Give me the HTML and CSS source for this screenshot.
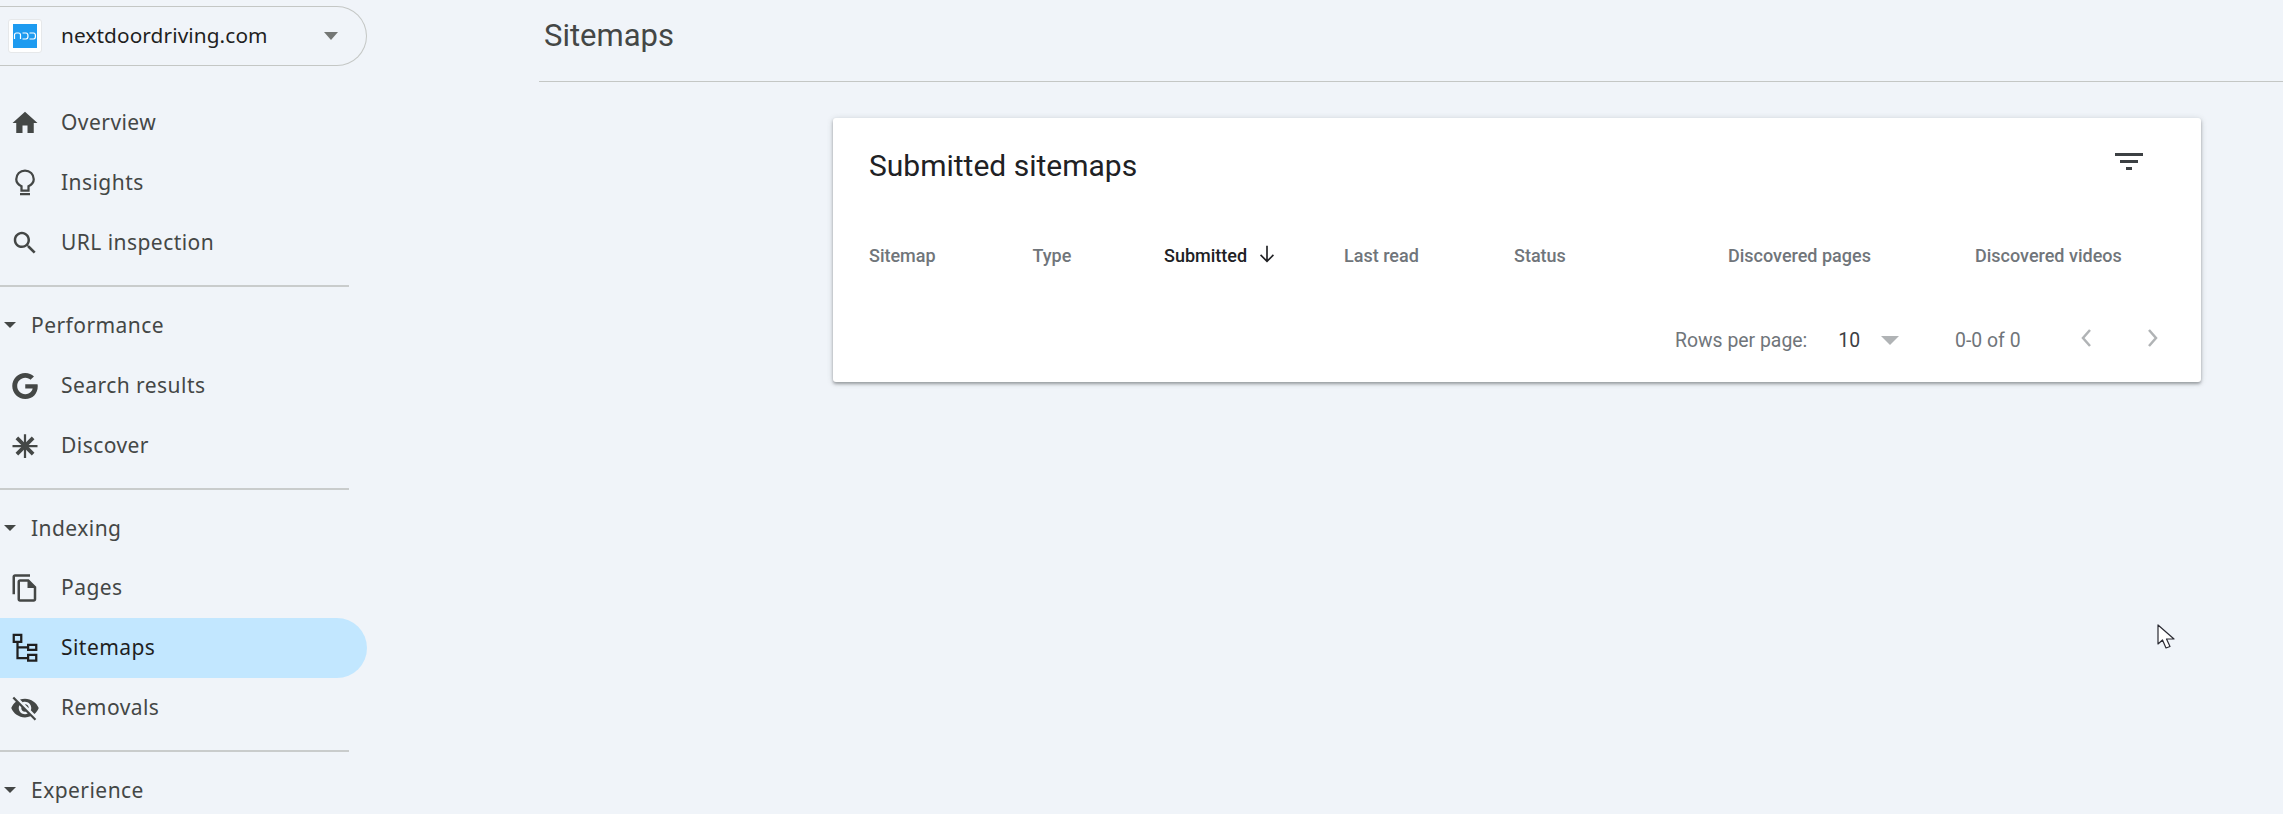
FILE: index.html
```html
<!DOCTYPE html>
<html lang="en">
<head>
<meta charset="utf-8">
<title>Sitemaps</title>
<link rel="stylesheet" href="styles.css">
</head>
<body>
<div class="app">
  <aside class="sidebar">
    <div class="property">
      <span class="logo">
        <svg viewBox="0 0 24 24" width="24" height="24"><rect width="24" height="24" fill="#1e9bf0"/><path d="M1.500 15V11Q1.500 9 3.500 9H5.500Q7.500 9 7.500 11V15M9.500 9H13Q15 9 15 12Q15 15 13 15H9.500M16.500 9H20.500Q22.500 9 22.500 12Q22.500 15 20.500 15H16.500" fill="none" stroke="#fff" stroke-width="1.200"/></svg>
      </span>
      <span class="property-name">nextdoordriving.com</span>
      <span class="caret caret-prop"></span>
    </div>
    <nav class="nav">
      <a class="item"><svg class="icon" viewBox="0 0 24 24"><path d="M10 20v-6h4v6h5v-8h3L12 3 2 12h3v8z"/></svg><span>Overview</span></a>
      <a class="item"><svg class="icon" viewBox="0 0 24 24"><path class="line" d="M9.200 18V14.600C6.600 13.300 5 11.400 5 9C5 5.100 8.100 2 12 2S19 5.100 19 9C19 11.400 17.400 13.300 14.800 14.600V18ZM8 20.800H16"/></svg><span>Insights</span></a>
      <a class="item"><svg class="icon" viewBox="0 0 24 24"><path d="M15.500 14h-.79l-.28-.27C15.410 12.590 16 11.110 16 9.500 16 5.910 13.090 3 9.500 3S3 5.910 3 9.500 5.910 16 9.500 16c1.610 0 3.090-.59 4.230-1.570l.27.28v.79l5 4.990L20.490 19l-4.990-5zm-6 0C7.010 14 5 11.990 5 9.500S7.010 5 9.500 5 14 7.010 14 9.500 11.990 14 9.500 14z"/></svg><span>URL inspection</span></a>
      <div class="divider"></div>
      <div class="group group-wide"><i class="caret caret-group"></i><span>Performance</span></div>
      <a class="item"><svg class="icon icon-g" viewBox="0 0 24 24"><path d="M12.240 10.285V14.400h6.806c-.275 1.765-2.056 5.174-6.806 5.174-4.095 0-7.439-3.389-7.439-7.574s3.345-7.574 7.439-7.574c2.330 0 3.891.989 4.785 1.849l3.254-3.138C18.189 1.186 15.479 0 12.240 0c-6.635 0-12 5.365-12 12s5.365 12 12 12c6.926 0 11.520-4.869 11.520-11.726 0-.788-.085-1.390-.189-1.989H12.240z"/></svg><span>Search results</span></a>
      <a class="item"><svg class="icon" viewBox="0 0 24 24"><path class="line" d="M12 2.500V21.500M2 12H22"/><path class="line thick" d="M5.500 5.500L18.500 18.500M18.500 5.500L5.500 18.500"/></svg><span>Discover</span></a>
      <div class="divider"></div>
      <div class="group"><i class="caret caret-group"></i><span>Indexing</span></div>
      <a class="item"><svg class="icon" viewBox="0 0 24 24"><path d="M16 1H4c-1.100 0-2 .9-2 2v14h2V3h12V1zm-1 4H8c-1.100 0-1.990.9-1.990 2L6 21c0 1.100.89 2 1.990 2H19c1.100 0 2-.9 2-2V11l-6-6zM8 21V7h6v5h5v9H8z"/></svg><span>Pages</span></a>
      <a class="item active"><svg class="icon" viewBox="0 0 24 24"><path class="line" d="M3 1.500H9V7H3ZM6 7V20H14.500M6 11.500H14.500M14.500 9.500H21V13.500H14.500ZM14.500 17.500H21V22H14.500Z"/></svg><span>Sitemaps</span></a>
      <a class="item"><svg class="icon" viewBox="0 0 24 24"><path d="M12 7c2.760 0 5 2.240 5 5 0 .65-.13 1.260-.36 1.830l2.920 2.920c1.510-1.260 2.700-2.890 3.430-4.750-1.730-4.390-6-7.500-11-7.500-1.400 0-2.740.25-3.980.7l2.160 2.160C10.740 7.130 11.350 7 12 7zM2 4.270l2.280 2.280.46.46C3.080 8.300 1.780 10.020 1 12c1.730 4.390 6 7.500 11 7.500 1.550 0 3.030-.3 4.380-.84l.42.42L19.730 22 21 20.730 3.270 3 2 4.270zM7.530 9.800l1.550 1.550c-.05.21-.08.43-.08.65 0 1.660 1.340 3 3 3 .22 0 .44-.03.65-.08l1.550 1.550c-.67.33-1.410.53-2.200.53-2.760 0-5-2.240-5-5 0-.79.2-1.530.53-2.200zm4.310-.78l3.150 3.150.02-.16c0-1.660-1.340-3-3-3l-.17.01z"/></svg><span>Removals</span></a>
      <div class="divider"></div>
      <div class="group"><i class="caret caret-group"></i><span>Experience</span></div>
    </nav>
  </aside>
  <main class="main">
    <header class="page-head"><h1>Sitemaps</h1></header>
    <section class="card">
      <div class="card-head">
        <h2>Submitted sitemaps</h2>
        <div class="filter"><i class="f1"></i><i class="f2"></i><i class="f3"></i></div>
      </div>
      <div class="columns">
        <span>Sitemap</span>
        <span>Type</span>
        <span class="sorted">Submitted<svg class="arrow" viewBox="0 0 24 24"><path d="M12 3V20M5 13L12 20L19 13"/></svg></span>
        <span>Last read</span>
        <span>Status</span>
        <span class="num">Discovered pages</span>
        <span class="num">Discovered videos</span>
      </div>
      <div class="pager">
        <span class="rows-label">Rows per page:</span>
        <span class="rows-value">10</span>
        <span class="caret caret-pager"></span>
        <span class="range">0-0 of 0</span>
        <svg class="chev chev-prev" viewBox="0 0 12 20"><path d="M10 2L3 10L10 18"/></svg>
        <svg class="chev" viewBox="0 0 12 20"><path d="M2 2L9 10L2 18"/></svg>
      </div>
    </section>
  </main>
</div>
<svg class="cursor" viewBox="0 0 19 28" width="19" height="28"><path d="M1 1V20L5.500 16L9 24L13 22.500L9.500 15H17Z" fill="#fff" stroke="#2b2b33" stroke-width="1.200" stroke-linejoin="round"/></svg>
</body>
</html>
```
FILE: styles.css
```css
* { box-sizing: border-box; }
html, body { margin: 0; height: 100%; overflow: hidden; }
body { background: #f0f4f9; font-family: Roboto, "Liberation Sans", sans-serif; color: #444746; }
.app { display: flex; height: 814px; }
.sidebar { width: 539px; flex: none; padding-top: 6px; overflow: hidden; font-family: "Noto Sans", Roboto, sans-serif; }
.property { display: flex; align-items: center; width: 367px; height: 60px; padding-left: 8px; border: 1px solid #c4c7c5; border-left: 0; border-radius: 0 30px 30px 0; }
.logo { width: 34px; height: 34px; flex: none; display: flex; align-items: center; justify-content: center; background: #fff; border: 1px solid #e6e8ea; border-radius: 3px; }
.logo svg { display: block; }
.property-name { margin: 0 0 2px 19px; font-size: 20.800px; letter-spacing: .1px; color: #1f1f1f; flex: 1; }
.caret { display: block; width: 0; height: 0; border-style: solid; border-color: #747775 transparent transparent; }
.caret-prop { border-width: 8px 7px 0; margin-right: 28px; }
.nav { display: flex; flex-direction: column; padding-top: 27px; }
.item { display: flex; align-items: center; width: 367px; height: 60px; padding-left: 10px; font-size: 21px; letter-spacing: .45px; border-radius: 0 30px 30px 0; }
.item span { margin: 0 0 2px 21px; }
.item.active { background: #c2e7ff; color: #1f1f1f; }
.icon { width: 30px; height: 30px; flex: none; fill: currentColor; }
.icon-g { width: 26px; height: 26px; margin: 0 2px; }
.icon .line { fill: none; stroke: currentColor; stroke-width: 1.800; }
.icon .thick { stroke-width: 3; }
.divider { width: 349px; height: 2px; background: #c9cccc; margin-top: 12px; flex: none; }
.group { display: flex; align-items: center; height: 76px; margin-bottom: -8px; padding-left: 4px; font-size: 21px; letter-spacing: .45px; }
.group-wide { margin-bottom: -7px; }
.group span { margin: 0 0 1px 15px; }
.caret-group { border-width: 6px 6px 0; border-color: #444746 transparent transparent; }
.main { flex: 1; min-width: 0; }
.page-head { height: 82px; border-bottom: 1px solid #c4c7c5; padding: 13px 0 0 5px; }
.page-head h1 { margin: 0; font-size: 31px; font-weight: 400; line-height: 46px; color: #444746; }
.card { margin: 36px 0 0 294px; width: 1368px; height: 264px; background: #fff; border-radius: 3px; padding: 0 36px; box-shadow: 0 2px 3px rgba(60,64,67,.4), 0 1px 6px rgba(60,64,67,.2); }
.card-head { display: flex; justify-content: space-between; height: 94px; padding-top: 28px; }
.card-head h2 { margin: 0; font-size: 30px; font-weight: 400; line-height: 40px; color: #202124; }
.filter { display: flex; flex-direction: column; align-items: center; gap: 4px; width: 28px; margin: 7px 22px 0 0; }
.filter i { display: block; height: 3px; background: #3c4043; }
.f1 { width: 28px; }
.f2 { width: 18px; }
.f3 { width: 6px; }
.columns { display: grid; grid-template-columns: 163.500px 131.500px 180px 170px 214px 247px 147px; align-items: start; height: 88px; padding-top: 32px; font-size: 18px; font-weight: 500; color: #70757a; line-height: 24px; white-space: nowrap; }
.sorted { display: flex; align-items: center; color: #202124; }
.arrow { width: 22px; height: 22px; margin: -4px 0 0 9px; fill: none; stroke: #202124; stroke-width: 1.800; }
.pager { display: flex; align-items: center; height: 40px; margin-top: 20px; font-size: 19.400px; color: #70757a; }
.rows-label { margin-left: 806px; }
.rows-value { margin-left: 31px; color: #3c4043; }
.caret-pager { border-width: 9px 9px 0; border-color: #b0b3b5 transparent transparent; margin-left: 21px; }
.range { margin-left: 56px; }
.chev { width: 12px; height: 20px; margin-top: -5px; fill: none; stroke: #b0b3b5; stroke-width: 2.500; }
.chev-prev { margin: -5px 55px 0 59px; }
.cursor { position: absolute; left: 2157px; top: 624px; }
```
